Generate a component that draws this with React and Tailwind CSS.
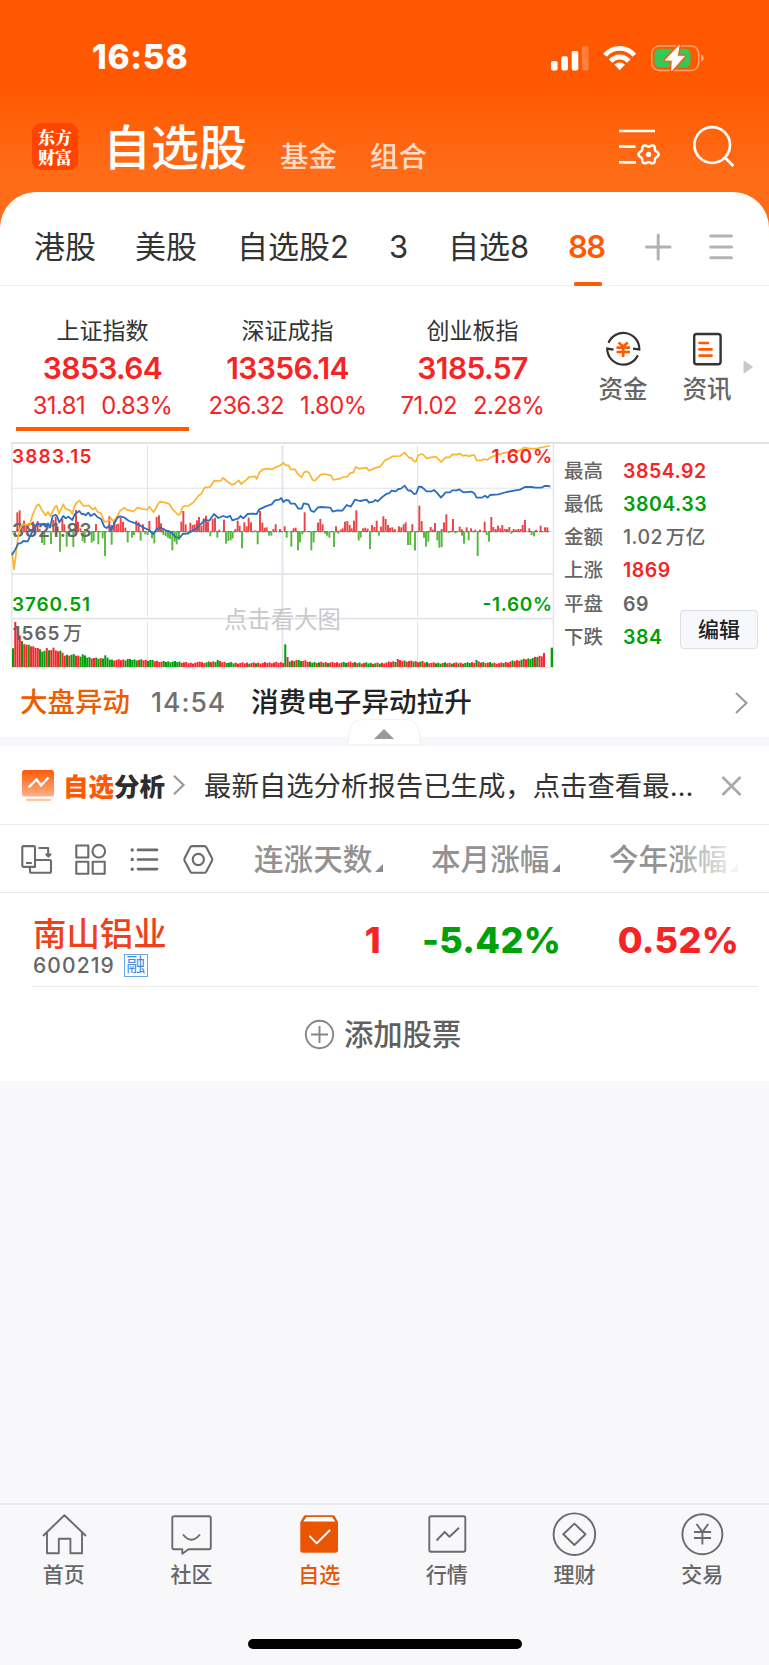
import React from "react";

/* ---------- chart data (three units per pixel) ---------- */
const AVG_LINE =
  "36,350 42,403 50,340 56,290 66,268 90,270 96,245 103,228 110,212 117,208 125,224 137,241 144,231 151,243 165,216 170,212 177,236 190,208 196,221 211,227 217,236 224,213 231,202 238,197 251,213 266,211 279,224 285,218 292,230 303,235 313,261 327,257 333,250 340,258 350,248 360,228 373,218 380,224 400,229 413,218 427,222 441,224 448,215 461,232 475,205 481,200 495,203 508,207 515,220 535,240 541,236 548,216 555,213 565,213 580,202 590,190 597,180 603,178 614,158 630,156 642,137 662,138 669,128 680,138 697,149 705,146 716,136 723,147 737,136 748,126 765,124 770,132 778,113 787,104 800,101 817,103 827,97 840,92 850,84 858,91 866,91 872,103 885,103 895,119 905,127 912,112 920,109 927,113 938,135 945,137 962,119 973,117 993,121 1000,135 1020,131 1030,126 1040,126 1047,119 1053,113 1060,113 1067,96 1078,101 1100,98 1107,107 1120,101 1140,95 1155,76 1170,69 1178,64 1200,63 1214,53 1228,69 1234,68 1243,80 1248,79 1255,60 1268,57 1280,70 1290,68 1308,65 1323,81 1337,67 1350,67 1357,58 1370,59 1380,56 1390,63 1397,60 1405,64 1415,61 1423,60 1430,76 1445,76 1453,72 1462,75 1470,68 1495,58 1520,52 1542,50 1560,46 1572,38 1590,41 1610,41 1630,36 1650,33";
const PRICE_LINE =
  "36,360 46,343 55,325 62,325 70,318 83,319 97,290 103,285 110,267 130,268 137,275 144,265 150,278 158,243 165,240 170,241 178,262 190,243 197,250 205,245 217,255 224,238 238,228 245,237 251,237 257,241 265,233 272,243 283,236 292,246 303,252 313,275 320,279 328,272 333,286 345,262 352,248 360,244 372,247 387,258 407,265 422,272 430,278 447,285 460,297 470,283 481,277 495,285 508,289 515,293 528,308 540,307 548,297 565,295 585,283 605,265 615,255 628,257 642,237 655,249 669,243 682,247 690,242 697,256 715,250 722,243 730,250 743,237 757,236 770,237 777,224 797,214 815,208 825,196 838,194 844,189 850,201 858,195 866,196 872,206 885,206 895,221 905,221 911,205 925,208 933,227 942,231 953,218 962,216 980,217 991,218 998,230 1012,226 1027,227 1040,210 1052,215 1065,194 1080,198 1100,194 1107,203 1120,200 1126,195 1133,199 1147,186 1160,176 1167,175 1175,167 1187,169 1195,162 1203,161 1214,152 1225,167 1232,166 1242,177 1248,176 1257,155 1265,156 1280,169 1295,169 1302,165 1310,172 1323,188 1337,172 1350,172 1357,166 1370,166 1377,163 1390,172 1415,170 1423,175 1430,188 1445,188 1455,182 1463,188 1470,180 1495,178 1520,171 1542,167 1560,164 1575,156 1595,156 1605,158 1625,158 1633,153 1645,153 1651,155";
const UP =
  "52:58 59:64 65:20 72:33 79:22 99:30 106:20 113:32 119:8 160:35 167:45 173:15 187:38 193:22 228:65 234:30 241:10 288:23 328:46 335:20 342:35 349:22 355:24 362:42 369:30 376:12 409:33 416:28 429:22 448:32 470:44 477:49 483:25 490:10 544:30 550:62 557:22 571:27 578:20 584:22 591:34 597:44 604:18 611:40 618:48 624:30 638:38 645:42 658:6 672:36 706:8 713:33 719:17 733:28 740:16 746:42 753:28 766:4 780:62 787:27 794:12 800:13 820:8 827:22 840:8 854:16 881:10 887:12 914:58 954:27 961:38 968:22 1008:16 1022:6 1028:10 1035:30 1042:32 1049:20 1055:10 1062:33 1069:64 1089:10 1096:12 1103:9 1116:20 1123:14 1130:33 1143:15 1150:46 1157:38 1164:20 1170:12 1177:13 1184:8 1197:16 1204:13 1211:22 1217:28 1237:22 1258:78 1265:32 1292:14 1298:6 1305:26 1325:8 1332:28 1339:52 1359:38 1379:15 1386:7 1400:13 1413:10 1426:6 1440:6 1454:30 1474:44 1480:14 1487:8 1494:18 1501:10 1507:20 1514:8 1521:8 1528:14 1541:8 1548:6 1555:8 1562:8 1568:20 1575:35 1588:10 1608:5 1622:18 1635:13 1642:13";
const DOWN =
  "45:16 126:34 133:40 153:37 180:60 200:45 207:15 220:46 248:28 254:34 275:33 281:28 295:38 308:20 315:73 335:39 383:32 396:18 402:10 422:27 436:8 443:10 456:20 463:35 490:10 497:14 504:18 510:22 517:56 524:30 530:38 537:25 564:8 631:14 652:18 678:36 685:28 692:26 698:20 726:50 773:38 807:12 814:12 860:18 874:45 894:56 900:32 907:8 934:56 941:32 975:6 981:12 988:18 1002:46 1015:6 1076:27 1082:18 1110:52 1137:12 1224:40 1231:40 1245:57 1272:18 1278:45 1285:30 1312:26 1318:48 1325:46 1345:4 1366:5 1386:12 1392:36 1406:26 1433:73 1460:10 1467:30 1534:6 1595:10 1602:14";
const parse = (s) => s.split(" ").map((p) => p.split(":").map(Number));

/* volume envelope: [x, height] */
const ENV = [[38, 42], [44.7, 138], [51.5, 120], [58, 98], [65, 79], [72, 69], [85, 64], [112, 57], [126, 46], [150, 48], [180, 48], [193, 34], [220, 36], [240, 31], [247, 36], [262, 28], [300, 24], [315, 28], [335, 20], [400, 21], [450, 19], [485, 15], [530, 15], [570, 11], [620, 13], [650, 16], [700, 11], [760, 11], [850, 13], [890, 20], [930, 13], [1050, 12], [1140, 10], [1200, 18], [1260, 15], [1300, 11], [1400, 11], [1430, 14], [1500, 10], [1560, 20], [1600, 26], [1620, 32], [1635, 35]];
const SPECIAL = { 15: 57, 16: 50, 18: 58, 21: 49, 31: 38, 41: 35, 51: 24, 61: 21, 83: 16, 91: 21, 121: 68, 122: 30, 127: 21, 130: 20, 150: 16, 171: 24, 182: 18, 206: 21, 236: 42 };
const GREEN = new Set([0, 4, 7, 12, 13, 14, 16, 21, 24, 26, 27, 30, 31, 32, 33, 34, 37, 38, 40, 41, 42, 43, 44, 50, 51, 52, 53, 54, 55, 57, 60, 61, 62, 67, 68, 69, 70, 71, 72, 73, 74, 86, 87, 90, 91, 95, 96, 97, 98, 105, 108, 121, 123, 125, 127, 128, 132, 133, 134, 136, 138, 140, 147, 148, 152, 154, 157, 158, 159, 161, 163, 170, 174, 178, 181, 184, 188, 189, 190, 192, 195, 198, 201, 202, 203, 206, 209, 212, 213, 218, 222, 226, 229, 230, 231, 233]);
const envAt = (x) => {
  for (let i = 1; i < ENV.length; i++) {
    if (x <= ENV[i][0]) {
      const [a, ha] = ENV[i - 1];
      const [b, hb] = ENV[i];
      return ha + ((hb - ha) * (x - a)) / (b - a);
    }
  }
  return 35;
};
const VOLUME = Array.from({ length: 237 }, (_, i) => {
  const x = 39 + i * 6.75;
  const wobble = i > 5 ? ((i * 7) % 5) - 1 : 0;
  return { x, h: SPECIAL[i] ?? envAt(x) + wobble, c: GREEN.has(i) ? "#00a008" : "#f5282f" };
});
const CJK = '"Inter","Noto Sans CJK SC",sans-serif';

function Chart() {
  return (
    <svg width="555" height="228" viewBox="0 441 555 228" className="block shrink-0" style={{ fontFamily: CJK }}>
      <g stroke="#e1e4ec" fill="none">
        <path d="M11 443H555" strokeWidth="2" stroke="#dfe2ea" />
        <path d="M11.8 443V668M553.4 443V668M11 667.6H554" strokeWidth="1.3" />
        <path d="M11 488.3H553M147.5 445.5V616.5M147.5 621V667M417.5 445.5V616.5M417.5 621V667" strokeWidth="1.1" />
        <path d="M11 573.8H553M11 618.6H553M282.5 445.5V616.5M282.5 621V667" strokeWidth="1.8" />
      </g>
      <text x="224" y="627.5" fontSize="23.4" fill="#c9c9cb">点击看大图</text>
      <g transform="translate(0 435) scale(.333333)">
        <path d="M36 290H1652" stroke="#777" strokeWidth="3.5" strokeDasharray="14 3" />
        {parse(UP).map(([x, h], i) => <rect key={i} x={x - 2.9} y={290 - h} width="5.8" height={h} fill="#ea4447" />)}
        {parse(DOWN).map(([x, h], i) => <rect key={i} x={x - 2.9} y={290} width="5.8" height={h} fill="#57b93c" />)}
        {VOLUME.map((b, i) => <rect key={i} x={b.x - 3} y={696 - b.h} width="6.1" height={b.h} fill={b.c} />)}
        <rect x="1652" y="638" width="7" height="58" fill="#00a008" />
      </g>
      <g fontSize="19" fontWeight="600">
        <text x="12" y="463" fill="#f62424" textLength="79.5">3883.15</text>
        <text x="12" y="537.4" fill="#666" textLength="79.5">3821.83</text>
        <text x="12" y="611" fill="#00a008" textLength="78">3760.51</text>
        <text x="12.5" y="639.5" fill="#666" textLength="47">1565</text>
        <text x="63" y="639.5" fill="#666" fontWeight="500">万</text>
      </g>
      <g transform="translate(0 435) scale(.333333)" fill="none" strokeLinejoin="round">
        <polyline points={AVG_LINE} stroke="#fdb52f" strokeWidth="5.2" />
        <polyline points={PRICE_LINE} stroke="#2b6dc0" strokeWidth="5.4" />
      </g>
      <g fontSize="19" fontWeight="600">
        <text x="491.5" y="463" fill="#f62424" textLength="60.5">1.60%</text>
        <text x="482.5" y="611" fill="#00a008" textLength="69.5">-1.60%</text>
      </g>
    </svg>
  );
}

function StatusBar() {
  return (
    <div className="flex h-[115px] items-center pl-[92px] text-white">
      <div className="w-[458px] text-[33.5px] leading-none font-extrabold tracking-[0.7px]">16:58</div>
      <svg width="160" height="32" viewBox="550 41 160 32">
        <rect x="551" y="60" width="6.6" height="9.5" rx="1.8" fill="#fff" />
        <rect x="561.3" y="55.3" width="6.6" height="14.2" rx="1.8" fill="#fff" />
        <rect x="571.7" y="50" width="6.6" height="19.5" rx="1.8" fill="#fff" />
        <rect x="582" y="45" width="6.6" height="24.5" rx="1.8" fill="#fff" opacity=".24" />
        <g fill="none" stroke="#fff" strokeWidth="4.8">
          <path d="M605 54.2C612.8 45.2 626.6 45.2 634.4 54.2" />
          <path d="M610.6 60.2C615.8 54.6 623.6 54.6 628.8 60.2" />
        </g>
        <path d="M614.4 63.6C617.6 60.7 621.8 60.7 625 63.6L619.7 69.2Z" fill="#fff" />
        <rect x="651.7" y="45" width="47" height="24.4" rx="7.6" fill="none" stroke="#fff" strokeOpacity=".45" strokeWidth="1.5" />
        <rect x="654.5" y="47.8" width="36" height="18.6" rx="5" fill="#34c759" />
        <path d="M701 53.3C704.6 54.7 704.6 59.5 701 61Z" fill="#fff" opacity=".5" />
        <path d="M679.3 44.2L665.3 59.2H672.3L671.4 70L684.4 55.3H677.3Z" fill="#fff" stroke="#ff5a03" strokeWidth="3.6" strokeLinejoin="round" />
        <path d="M679.3 44.2L665.3 59.2H672.3L671.4 70L684.4 55.3H677.3Z" fill="#fff" stroke="#fff" strokeWidth=".8" strokeLinejoin="round" />
      </svg>
    </div>
  );
}

/* six-lobed cog outline: radius oscillates around its mean */
const COG = Array.from({ length: 72 }, (_, i) => {
  const a = (i / 72) * Math.PI * 2;
  const r = 8.9 + 1.15 * Math.cos(6 * a);
  return `${(648.6 + r * Math.cos(a)).toFixed(2)},${(154.4 + r * Math.sin(a)).toFixed(2)}`;
}).join(" ");

function Header() {
  return (
    <div className="flex h-[62px] items-center pl-8 text-white">
      <div className="flex h-[47px] w-[46px] flex-col items-center justify-center rounded-[9px] bg-[#ff4402] pt-px font-['Noto_Serif_CJK_SC','Noto_Sans_CJK_SC',sans-serif] text-[17px] leading-[20px] font-black">
        <span>东方</span>
        <span>财富</span>
      </div>
      <div className="ml-[25px] w-[177px] pt-[3px] text-[48px] leading-none font-medium">自选股</div>
      <div className="w-[90px] pt-[22px] text-[28.5px] leading-none font-medium text-[#ffdcc8]">基金</div>
      <div className="w-[248px] pt-[22px] text-[28.5px] leading-none font-medium text-[#ffdcc8]">组合</div>
      <svg className="mt-[2px]" width="44" height="40" viewBox="618 127 44 40" fill="none" stroke="#fff" strokeWidth="2.7">
        <path d="M619 131H655M619 146.6H635.5M619 162.3H636" />
        <polygon points={COG} strokeLinejoin="round" strokeWidth="2.5" />
        <circle cx="648.6" cy="154.4" r="2.6" fill="#fff" stroke="none" />
      </svg>
      <svg className="mt-[2px] ml-[31px]" width="44" height="44" viewBox="693 125 44 44" fill="none" stroke="#fff" strokeWidth="2.7">
        <circle cx="712.2" cy="145" r="17.8" />
        <path d="M725 157.5L733.3 166" />
      </svg>
    </div>
  );
}

function GroupTabs() {
  return (
    <div className="relative grid h-[94px] grid-cols-[101px_102px_152px_59px_120px_76px_64px_60px] items-center border-b-[1.5px] border-[#eeeeef] pt-[17px] pl-[34px] text-[31px] leading-none text-[#333]">
      <span className="mb-[2px]">港股</span>
      <span className="mb-[2px]">美股</span>
      <span className="mb-[2px]">自选股2</span>
      <span className="mb-[2px]">3</span>
      <span className="mb-[2px]">自选8</span>
      <span className="mb-[2px] font-semibold tracking-[-1.6px] text-[#ff5a03]">88</span>
      <svg width="28" height="28" viewBox="644 232.5 28 28" stroke="#b2b2b2" strokeWidth="3" strokeLinecap="round">
        <path d="M646.5 246.5H670M658.2 234.5V258.5" />
      </svg>
      <svg width="26" height="28" viewBox="708 232.5 26 28" stroke="#b2b2b2" strokeWidth="3" strokeLinecap="round">
        <path d="M710.7 235.5H731.5M710.7 246.5H731.5M710.7 257.2H731.5" />
      </svg>
      <div className="absolute top-[90px] left-[574px] h-[4px] w-[28px] rounded-[1.5px] bg-[#ff5a03]" />
    </div>
  );
}

function Index({ name, value, diff, pct, active }) {
  return (
    <div className={"flex h-[116px] flex-col items-center border-b-4 text-[#f62424] " + (active ? "border-[#ff5a03]" : "border-transparent")}>
      <div className="mt-[2px] text-[23px] leading-[28px] text-[#333]">{name}</div>
      <div className="mt-[6px] text-[30px] leading-[34px] font-semibold tracking-[-0.6px]">{value}</div>
      <div className="mt-[7px] flex gap-[16px] text-[23.8px] leading-[28px] font-normal tracking-[-0.5px]">
        <span>{diff}</span>
        <span>{pct}</span>
      </div>
    </div>
  );
}

function Indices() {
  return (
    <div className="flex h-[155px] pt-[29px] pl-4">
      <div className="grid grid-cols-[173px_197px_173px]">
        <Index name="上证指数" value="3853.64" diff="31.81" pct="0.83%" active />
        <Index name="深证成指" value="13356.14" diff="236.32" pct="1.80%" />
        <Index name="创业板指" value="3185.57" diff="71.02" pct="2.28%" />
      </div>
      <div className="ml-[38px] flex w-[52px] flex-col items-center pt-[14px] text-[24.5px] leading-[30px] font-medium text-[#666]">
        <svg width="40" height="40" viewBox="604 329 40 40" fill="none" stroke="#333" strokeWidth="2.2">
          <path d="M609.5 342.8A16 16 0 0 1 640.3 349.4L634 348.6" />
          <path d="M638.8 355.2A16 16 0 0 1 608.2 348.6L614.5 349.7" />
          <path d="M619.5 342.5L624.2 346.5L628.8 342.5M617.5 347.6H631M617.5 352H631M624.2 346.5V357" stroke="#ff5a03" strokeWidth="2.6" />
        </svg>
        <span className="mt-[5px] whitespace-nowrap">资金</span>
      </div>
      <div className="ml-[32px] flex w-[52px] flex-col items-center pt-[14px] text-[24.5px] leading-[30px] font-medium text-[#666]">
        <svg width="40" height="40" viewBox="688 329 40 40" fill="none" strokeWidth="2.4">
          <rect x="695.2" y="334" width="26.4" height="30.2" rx="2.5" stroke="#333" />
          <path d="M700.5 343H709M700.5 349.4H712.6M700.5 355.6H712.6" stroke="#ff5a03" strokeWidth="2.6" strokeLinecap="round" />
        </svg>
        <span className="mt-[5px] whitespace-nowrap">资讯</span>
      </div>
      <svg className="mt-[44px] ml-[10px]" width="10" height="16" viewBox="0 0 10 16"><path d="M1 2L9.5 8L1 14Z" fill="#c8c8c8" stroke="#c8c8c8" strokeLinejoin="round" /></svg>
    </div>
  );
}

const STATS = [
  ["最高", "3854.92", "text-[#f62424] font-semibold"],
  ["最低", "3804.33", "text-[#00a008] font-semibold"],
  ["金额", "1.02 万亿", "text-[#666] [word-spacing:-3px]"],
  ["上涨", "1869", "text-[#f62424] font-semibold"],
  ["平盘", "69", "text-[#666] font-semibold"],
  ["下跌", "384", "text-[#00a008] font-semibold"],
];

function MarketPanel() {
  return (
    <div className="relative flex h-[228px]">
      <Chart />
      <div className="mt-px flex-1 border-t-2 border-[#dfe2ea] pt-[11px] pl-[9px] font-medium">
        {STATS.map(([label, value, tone]) => (
          <div key={label} className="flex h-[33.2px] items-center text-[19.5px] leading-none">
            <span className="w-[59px] text-[#666]">{label}</span>
            <span className={"whitespace-nowrap tracking-[0.5px] " + tone}>{value}</span>
          </div>
        ))}
      </div>
      <button className="absolute top-[169px] right-[11px] h-[39px] w-[78px] rounded-[4px] border border-[#dcdfe6] bg-[#f7f8fb] pb-px text-[21px] leading-none font-medium text-[#222]">编辑</button>
    </div>
  );
}

function NewsRow() {
  return (
    <div className="relative flex h-[77px] items-center border-b-[9px] border-[#f6f7fa] pl-[20px] leading-none font-medium">
      <span className="w-[131px] text-[27.5px] text-[#f05a00]">大盘异动</span>
      <span className="w-[100px] pb-px text-[26.5px] tracking-[1px] text-[#707070]">14:54</span>
      <span className="w-[484px] pb-px text-[27.6px] text-[#222]">消费电子异动拉升</span>
      <svg className="mb-px" width="14" height="24" viewBox="0 0 14 24" fill="none" stroke="#999" strokeWidth="2"><path d="M1 2L11.5 12L1 22" /></svg>
      <svg className="absolute top-[49px] left-[346px]" width="76" height="28" viewBox="346 718 76 28">
        <path d="M347.3 744.8L349.2 732Q351.3 719.6 362 719.6H407Q417 719.6 419 732L420.9 744.8Z" fill="#fff" stroke="#f0f1f4" />
        <path d="M384 729L394 739H374Z" fill="#999" />
      </svg>
    </div>
  );
}

function AnalysisRow() {
  return (
    <div className="flex h-[78.5px] items-center border-b border-[#eaeaeb] pl-[22px] leading-none">
      <svg className="mt-[2px]" width="33" height="32" viewBox="22 771 33 32">
        <defs>
          <linearGradient id="card" x1="0" y1="0" x2="0" y2="1">
            <stop offset="0" stopColor="#ff5a03" />
            <stop offset="1" stopColor="#ffb08a" />
          </linearGradient>
        </defs>
        <rect x="22" y="771" width="32" height="26.5" rx="2.5" fill="url(#card)" />
        <path d="M28.5 788.5L36.5 780.5L41 786.5L48.5 778.5" stroke="#fff" strokeWidth="2.4" fill="none" />
        <path d="M27 800.8H50" stroke="#ffc4a8" strokeWidth="2.2" strokeLinecap="round" />
      </svg>
      <div className="ml-[8px] w-[109px] pt-[3px] text-[25.5px] font-black whitespace-nowrap text-[#2d2d2d]">
        <span className="text-[#ff5a03]">自选</span>分析
      </div>
      <svg className="mt-px" width="14" height="24" viewBox="0 0 14 24" fill="none" stroke="#999" strokeWidth="2.2"><path d="M2 2.8L11.5 12L2 21.2" /></svg>
      <div className="ml-[18px] w-[517px] pt-[4px] text-[27.4px] whitespace-nowrap text-[#333]">最新自选分析报告已生成，点击查看最…</div>
      <svg className="mt-[2px]" width="22" height="22" viewBox="0 0 22 22" stroke="#aaa" strokeWidth="2.6"><path d="M1.5 2L19.5 20M19.5 2L1.5 20" /></svg>
    </div>
  );
}

function SortLabel({ children, className }) {
  return (
    <div className={"flex items-end pt-[3px] " + className}>
      <span>{children}</span>
      <svg className="mb-[2px] ml-[3px]" width="8" height="8" viewBox="0 0 8 8"><path d="M8 0V8H0Z" fill="#888b93" /></svg>
    </div>
  );
}

function ColumnBar() {
  return (
    <div className="relative flex h-[68px] items-center border-b border-[#eaeaeb] text-[29.6px] leading-none font-medium text-[#929292]">
      <svg className="mt-px shrink-0" width="254" height="40" viewBox="0 838.5 254 40" fill="none" stroke="#6b6b6b" strokeWidth="2.1" strokeLinejoin="round">
        <path d="M30 866.4H23.8Q22.3 866.4 22.3 865V847Q22.3 845.6 23.8 845.6H33.6Q35 845.6 35 847V866.4H30M26 862.5H31.8M38.5 847.5H48.2V855.5M45.7 853.2L48.4 856L51 853.2M35 859.5H49.6Q51 859.5 51 861V870.7Q51 872.2 49.6 872.2H31.4Q30 872.2 30 870.7V866.4" />
        <path d="M76.3 845H88.3V857H76.3ZM76.3 861.2H88.3V873.2H76.3ZM92.7 861.2H104.7V873.2H92.7Z" />
        <circle cx="98.8" cy="850.7" r="6.3" />
        <path d="M138 849.4H157M138 859H157M138 868.6H157" strokeLinecap="round" strokeWidth="2.7" />
        <path d="M132.2 849.4V849.5M132.2 859V859.1M132.2 868.6V868.7" strokeLinecap="round" strokeWidth="3.4" />
        <path d="M192 845.6H204.6Q205.6 845.6 206.2 846.6L212 857.8Q212.6 859 212 860.2L206.2 871.2Q205.6 872.2 204.6 872.2H192Q191 872.2 190.4 871.2L184.6 860.2Q184 859 184.6 857.8L190.4 846.6Q191 845.6 192 845.6Z" />
        <circle cx="198.3" cy="859" r="5.6" />
      </svg>
      <SortLabel className="w-[177px]">连涨天数</SortLabel>
      <SortLabel className="w-[178px]">本月涨幅</SortLabel>
      <SortLabel className="w-[140px]">今年涨幅</SortLabel>
      <div className="absolute top-2 right-0 h-[50px] w-[100px] bg-gradient-to-r from-white/0 to-white to-75%" />
    </div>
  );
}

function StockRow() {
  return (
    <div className="mr-[11px] ml-8 flex h-[94px] border-b border-[#eaeaeb] leading-none">
      <div className="w-[331px] pt-[23px] pl-px">
        <div className="text-[33.4px] leading-[36px] font-medium text-[#f0401a]">南山铝业</div>
        <div className="flex h-[24px] items-center pt-[4px] text-[21px] font-medium tracking-[1.1px] text-[#666]">
          600219
          <span className="ml-[9px] flex h-[23px] w-[24px] items-center justify-center border-[1.5px] border-[#6aa6e8] text-[19px] leading-none font-normal tracking-normal text-[#3f8be0]">融</span>
        </div>
      </div>
      <div className="grid flex-1 grid-cols-[18px_180px_178px] pt-[29px] text-right text-[36px] font-extrabold tracking-[0.3px]">
        <span className="text-[#f62424]">1</span>
        <span className="text-[#00a008]">-5.42%</span>
        <span className="text-[#f62424]">0.52%</span>
      </div>
    </div>
  );
}

const TABS = [
  ["首页", <path key="i" d="M11 24L32.4 3.2L54 24M15 20.5V41.3H26.8V26.8H38.4V41.3H50V20.5" />],
  ["社区", <path key="i" d="M15 4.3H50Q51.8 4.3 51.8 6V35.5Q51.8 37.2 50 37.2H29.5L23.3 41.8V37.2H15Q13.3 37.2 13.3 35.5V6Q13.3 4.3 15 4.3ZM24 22.5Q32.4 33 41 22.5" />],
  ["自选", null],
  ["行情", <path key="i" d="M16 4.3H48.6Q50.3 4.3 50.3 6V38Q50.3 39.7 48.6 39.7H16Q14.3 39.7 14.3 38V6Q14.3 4.3 16 4.3ZM21.5 28.5L29.7 20L34.5 24.8L44 15.7" />],
  ["理财", <g key="i"><circle cx="32.4" cy="22.2" r="20.8" /><path d="M32.4 11.6L43.5 22.2L32.4 33L21.3 22.2Z" /></g>],
  ["交易", <g key="i"><circle cx="32.4" cy="22.2" r="20" /><path d="M26.5 12L32.4 20L38.3 12M24 20H41M24 26H41M32.4 20V32.5" /></g>],
];

function BottomTabs() {
  return (
    <div className="h-[162px] border-t-2 border-[#ebecee] bg-[#f8f8fb]">
      <div className="mr-[3px] grid grid-cols-6 pt-[7px]">
        {TABS.map(([label, icon]) => (
          <div key={label} className="flex flex-col items-center">
            <svg width="64" height="46" viewBox="0 0 64 46" fill="none" stroke="#6b6b6b" strokeWidth="1.9" strokeLinejoin="round">
              {icon ?? (
                <g stroke="none">
                  <path d="M18 3.3H46Q47.4 3.3 48 4.4L51 10V38.4Q51 40.8 48.6 40.8H15.6Q13.3 40.8 13.3 38.4V10L16.6 4.4Q17.2 3.3 18 3.3Z" fill="#ea5504" />
                  <path d="M19.5 5H45L48.3 9.4H16.3Z" fill="#fff" />
                  <path d="M22.5 23.8L29.7 31.3L43 18" fill="none" stroke="#fff" strokeWidth="1.9" />
                </g>
              )}
            </svg>
            <span className={"mt-[3px] text-[21px] leading-[28px] font-medium " + (icon ? "text-[#666]" : "text-[#ea5504]")}>{label}</span>
          </div>
        ))}
      </div>
      <div className="mx-auto mt-[50px] h-[10px] w-[274px] rounded-full bg-black" />
    </div>
  );
}

export default function App() {
  return (
    <div className="flex h-[1665px] w-[769px] flex-col overflow-hidden bg-[#f8f8fb] font-['Inter','Noto_Sans_CJK_SC',sans-serif]">
      <div className="bg-[linear-gradient(180deg,#ff5800_0px,#ff5800_84px,#ff6c18_175px)]">
        <StatusBar />
        <Header />
        <div className="mt-[15px] rounded-t-[36px] bg-white">
          <GroupTabs />
        </div>
      </div>
      <div className="h-[795px] bg-white">
        <Indices />
        <MarketPanel />
        <NewsRow />
        <AnalysisRow />
        <ColumnBar />
        <StockRow />
        <div className="flex h-[96px] items-center pl-[304px] text-[29.3px] leading-none font-medium text-[#606060]">
          <svg width="31" height="31" viewBox="0 0 31 31" fill="none" stroke="#85858c" strokeWidth="1.9">
            <circle cx="15.5" cy="15.5" r="13.7" />
            <path d="M7 15.5H24M15.5 7V24" />
          </svg>
          <span className="ml-[9px] pt-px">添加股票</span>
        </div>
      </div>
      <div className="flex-1" />
      <BottomTabs />
    </div>
  );
}
